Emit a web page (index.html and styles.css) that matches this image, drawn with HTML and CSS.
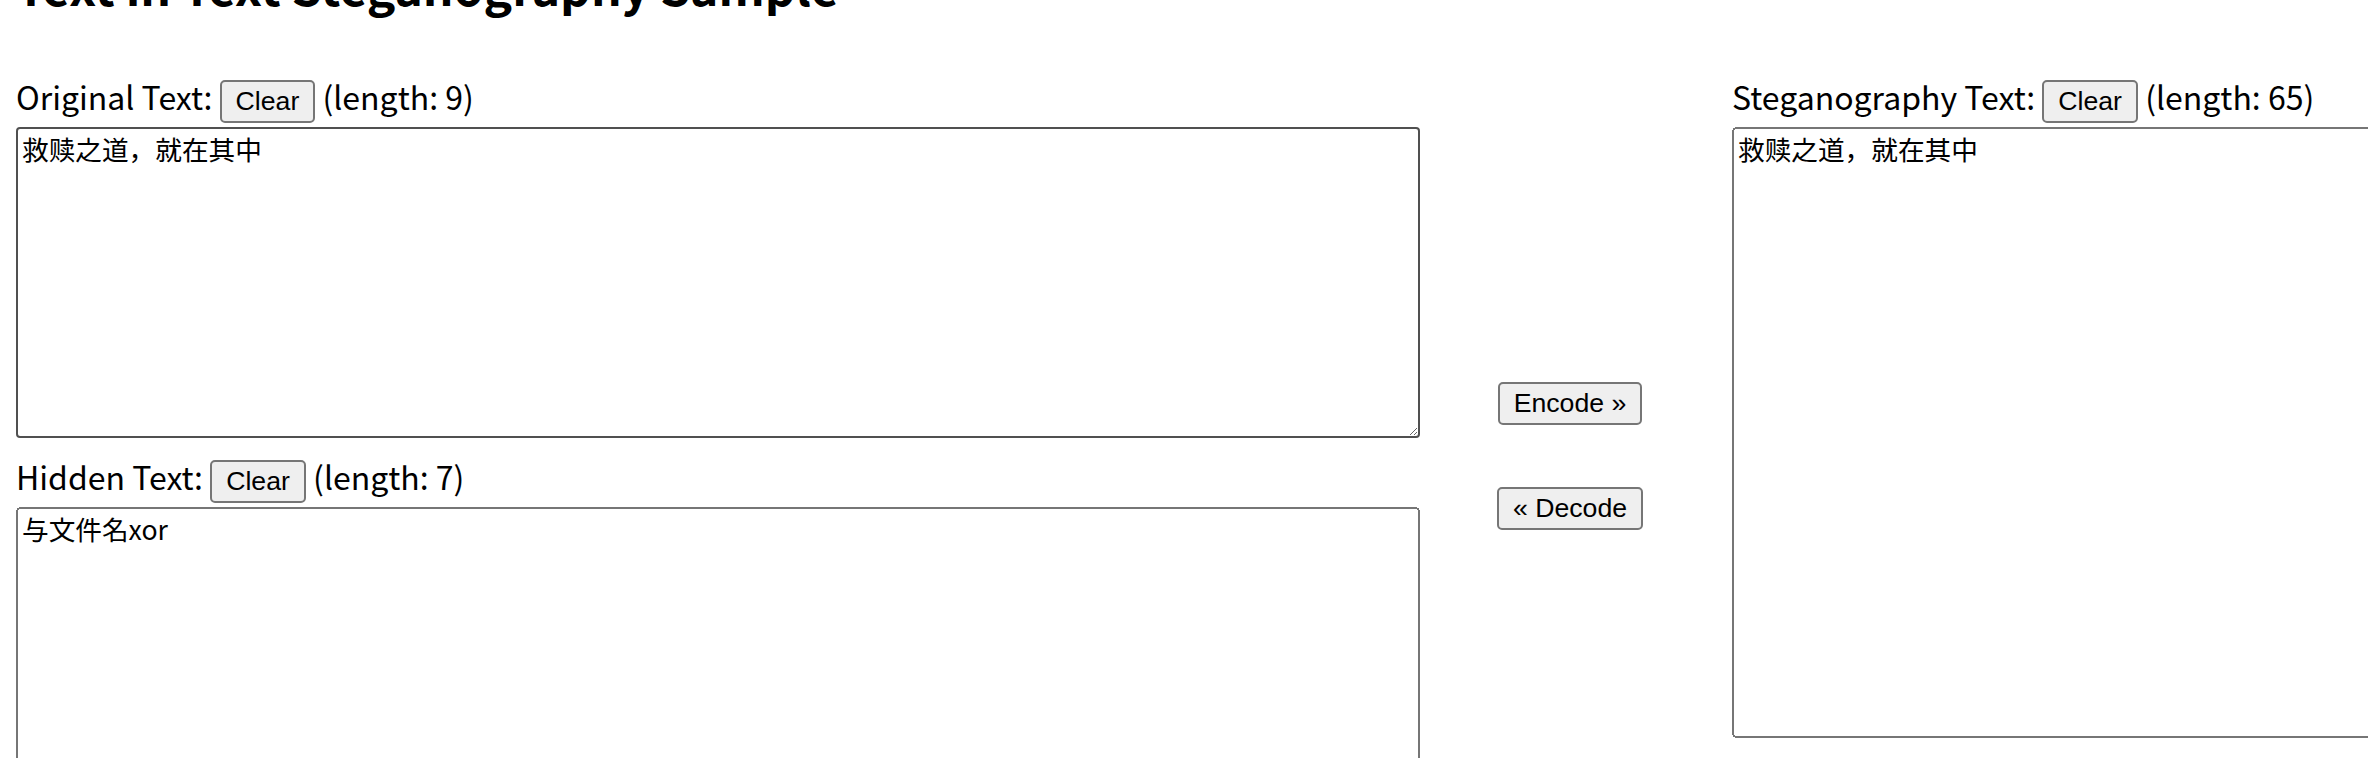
FILE: index.html
```
<!DOCTYPE html>
<html lang="ja">
<head>
<meta charset="utf-8">
<title>Text in Text Steganography Sample</title>
<link rel="stylesheet" href="styles.css">
</head>
<body>
<main class="page">
  <h2 class="title">Text in Text Steganography Sample</h2>
  <div class="workspace">
    <section class="col col-left">
      <div class="field">
        <div class="label-row"><span class="label">Original Text:</span> <button class="btn" type="button">Clear</button> <span class="count">(length: 9)</span></div>
        <textarea class="ta ta-short ta-hover">救赎之道，就在其中</textarea>
      </div>
      <div class="field field-second">
        <div class="label-row"><span class="label">Hidden Text:</span> <button class="btn" type="button">Clear</button> <span class="count">(length: 7)</span></div>
        <textarea class="ta ta-short">与文件名xor</textarea>
      </div>
    </section>
    <div class="col col-mid">
      <button class="btn btn-action" type="button">Encode »</button>
      <button class="btn btn-action" type="button">« Decode</button>
    </div>
    <section class="col col-right">
      <div class="field">
        <div class="label-row"><span class="label">Steganography Text:</span> <button class="btn" type="button">Clear</button> <span class="count">(length: 65)</span></div>
        <textarea class="ta ta-tall">救赎之道，就在其中</textarea>
      </div>
    </section>
  </div>
</main>
</body>
</html>
```
FILE: styles.css
```
html {
  zoom: 2;
  overflow: hidden;
  background: #ffffff;
}

body {
  margin: 0;
  color: #000000;
  font-family: "Noto Sans CJK JP", "Noto Sans", sans-serif;
  font-size: 16px;
}

.page {
  display: flex;
  flex-direction: column;
  padding: 0 8px;
}

.title {
  margin: -19.5px 0 35.6px;
  font-size: 24px;
  line-height: 24px;
  font-weight: 700;
  white-space: nowrap;
}

.workspace {
  display: flex;
  align-items: flex-start;
}

.col-left,
.col-right {
  flex: 0 0 702px;
  display: flex;
  flex-direction: column;
}

.col-mid {
  flex: 0 0 156px;
  display: flex;
  flex-direction: column;
  align-items: center;
  gap: 31px;
  padding: 151px 6px 0 0;
  box-sizing: border-box;
}

.field {
  display: flex;
  flex-direction: column;
}

.field-second {
  margin-top: 11px;
}

.label-row {
  line-height: 16px;
  white-space: nowrap;
}

.btn {
  font-family: "Liberation Sans", Arial, sans-serif;
  font-size: 13.333px;
}

.ta {
  display: block;
  box-sizing: border-box;
  width: 702px;
  margin: 2px 0 0;
  font-family: "Noto Sans CJK JP", sans-serif;
  font-size: 13.333px;
  line-height: 1.2;
  color: #000000;
}

.ta-short {
  height: 155.5px;
}

.ta-tall {
  height: 305.5px;
}

.ta-hover {
  border: 1px solid #505050;
  border-radius: 2px;
}
```
